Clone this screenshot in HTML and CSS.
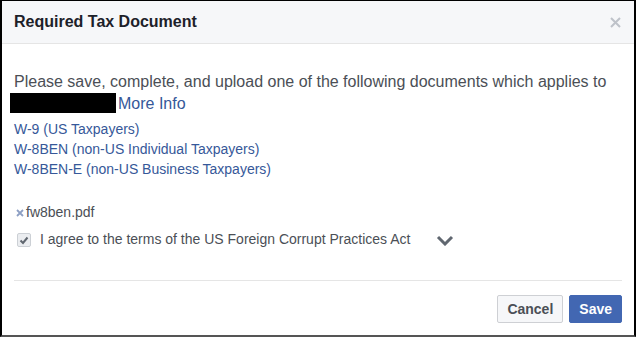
FILE: index.html
```html
<!DOCTYPE html>
<html lang="en">
<head>
    <meta charset="UTF-8">
    <title>Required Tax Document</title>
    <link rel="stylesheet" href="styles.css">
</head>
<body>
    <div class="dialog">
        <div class="header">
            <span class="title">Required Tax Document</span>
            <svg class="close" width="11" height="11" viewBox="0 0 11 11">
                <path d="M1 1 L10 10 M10 1 L1 10" stroke="#bec2c9" stroke-width="2" fill="none"/>
            </svg>
        </div>
        <div class="body">
            <p class="intro">Please save, complete, and upload one of the following documents which applies to <span class="redacted"></span><a href="#" class="more">More Info</a></p>
            <div class="docs">
                <a href="#">W-9 (US Taxpayers)</a>
                <a href="#">W-8BEN (non-US Individual Taxpayers)</a>
                <a href="#">W-8BEN-E (non-US Business Taxpayers)</a>
            </div>
            <div class="file">
                <svg class="remove" width="8" height="8" viewBox="0 0 8 8">
                    <path d="M1 1 L7 7 M7 1 L1 7" stroke="#8d9fc4" stroke-width="1.8" fill="none"/>
                </svg>fw8ben.pdf
            </div>
            <div class="agree">
                <span class="check">
                    <svg width="10" height="9" viewBox="0 0 10 9">
                        <path d="M1.5 4.5 L4 7 L8.5 1.5" stroke="#606770" stroke-width="2" fill="none"/>
                    </svg>
                </span>
                <span>I agree to the terms of the US Foreign Corrupt Practices Act</span>
                <svg class="chevron" width="18" height="11" viewBox="0 0 18 11">
                    <path d="M2 2 L9 9 L16 2" stroke="#606770" stroke-width="3" fill="none"/>
                </svg>
            </div>
        </div>
        <div class="footer">
            <button class="btn cancel">Cancel</button>
            <button class="btn save">Save</button>
        </div>
    </div>
</body>
</html>
```

FILE: styles.css
```css
html, body {
    margin: 0;
    padding: 0;
    background: #fff;
}
body {
    font-family: "Liberation Sans", Arial, sans-serif;
    color: #4b4f56;
}
.dialog {
    width: 632px;
    height: 334px;
    border-top: 1px solid #000;
    border-left: 2px solid #000;
    border-right: 2px solid #000;
    border-bottom: 2px solid #555;
    display: flex;
    flex-direction: column;
}
.header {
    height: 42px;
    background: #f6f7f9;
    border-bottom: 1px solid #e5e5e5;
    display: flex;
    align-items: center;
    justify-content: space-between;
    padding: 0 13px 0 12px;
}
.title {
    font-size: 16px;
    font-weight: bold;
    color: #1d2129;
    line-height: 42px;
}
.close {
    margin-top: 1px;
}
.body {
    flex: 1;
    padding: 27px 12px 0 12px;
}
.intro {
    margin: 0;
    font-size: 16px;
    line-height: 22px;
}
.redacted {
    display: inline-block;
    width: 106px;
    height: 20px;
    background: #000;
    margin-left: -4px;
    margin-right: 2px;
    vertical-align: top;
}
a {
    color: #365899;
    text-decoration: none;
}
.docs {
    margin-top: 4px;
    display: flex;
    flex-direction: column;
    font-size: 14px;
    line-height: 20px;
}
.file {
    margin-top: 23px;
    font-size: 14px;
    line-height: 20px;
    display: flex;
    align-items: center;
    padding-left: 2px;
}
.remove {
    margin: 2px 2px 0 0;
}
.agree {
    margin-top: 7px;
    font-size: 14px;
    line-height: 20px;
    display: flex;
    align-items: center;
}
.check {
    width: 12px;
    height: 12px;
    margin: 2px 9px 0 3px;
    border: 1px solid #ccd0d5;
    border-radius: 2px;
    background: #ebedf0;
    display: flex;
    align-items: center;
    justify-content: center;
}
.chevron {
    margin: 3px 0 0 26px;
}
.footer {
    margin: 0 12px;
    border-top: 1px solid #e5e5e5;
    padding: 14px 0 12px;
    display: flex;
    justify-content: flex-end;
    gap: 6px;
}
.btn {
    height: 28px;
    padding: 0 9px;
    font-family: "Liberation Sans", Arial, sans-serif;
    font-size: 14px;
    font-weight: bold;
    border-radius: 2px;
    border: 1px solid;
    cursor: pointer;
}
.cancel {
    background: #f6f7f9;
    border-color: #ced0d4;
    color: #4b4f56;
}
.save {
    background: #4267b2;
    border-color: #4267b2;
    color: #fff;
}
```
